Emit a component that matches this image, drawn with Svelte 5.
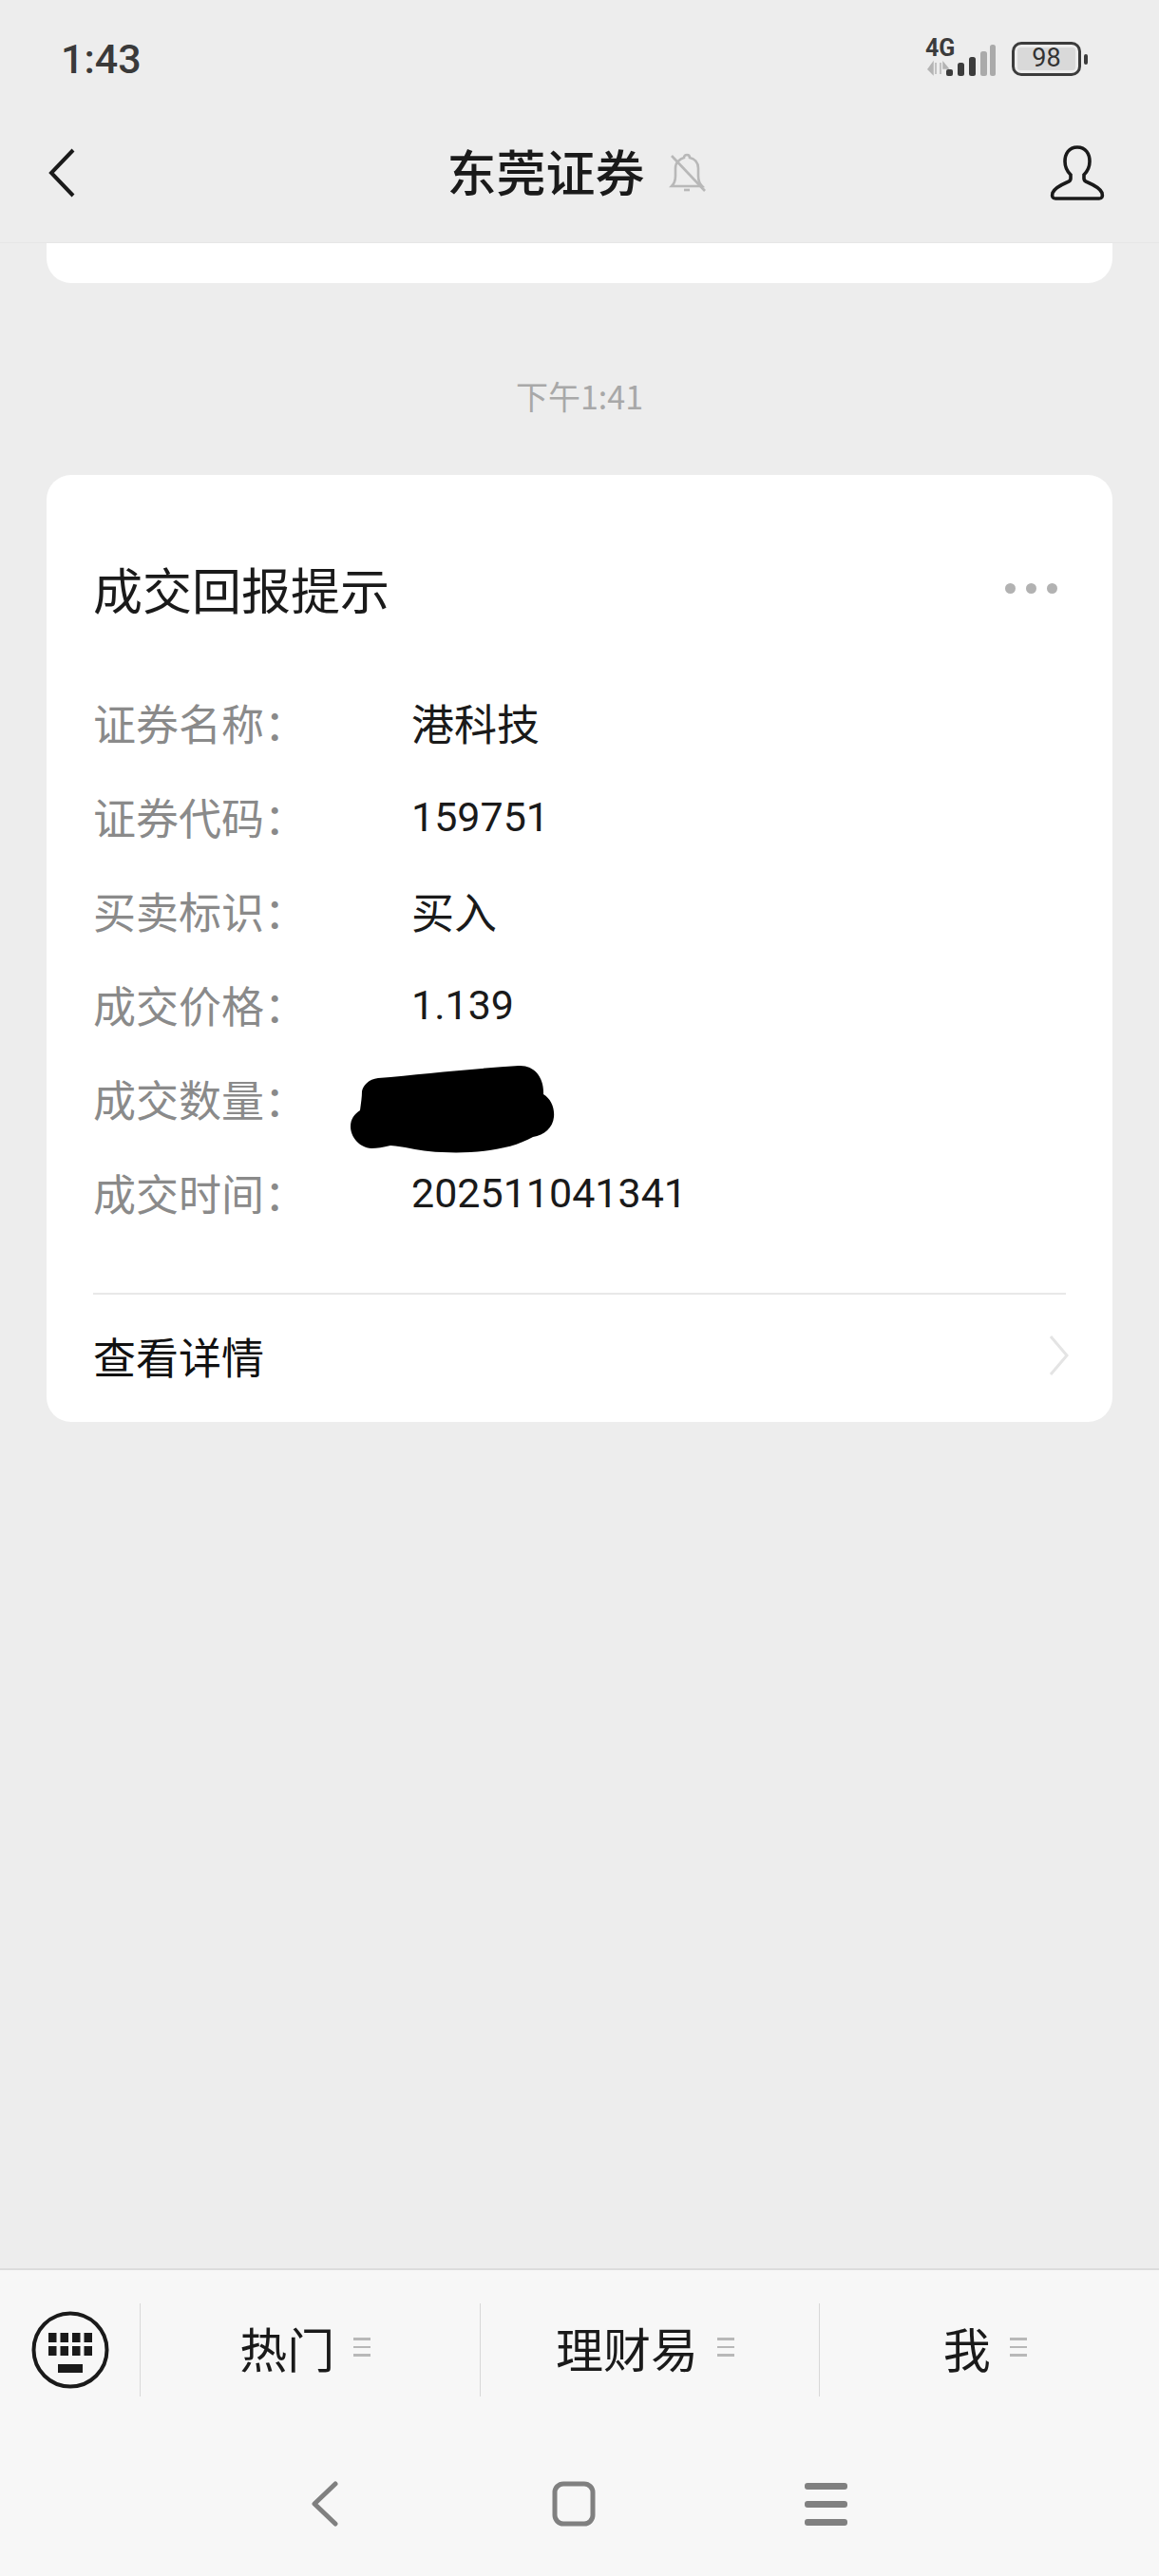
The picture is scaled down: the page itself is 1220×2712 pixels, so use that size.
<script>
  const rows = [
    { label: '证券名称：', value: '港科技' },
    { label: '证券代码：', value: '159751', num: true },
    { label: '买卖标识：', value: '买入' },
    { label: '成交价格：', value: '1.139', num: true },
    { label: '成交数量：', value: '', hidden: true },
    { label: '成交时间：', value: '202511041341', num: true }
  ];
  const tabs = ['热门', '理财易', '我'];
</script>

<div class="phone">
  <header class="top">
    <div class="status">
      <span class="clock">1:43</span>
      <div class="status-icons">
        <svg class="signal" width="76" height="50" viewBox="-2 -3 76 50">
          <text x="0" y="19" class="net">4G</text>
          <path d="M8 26v12l-5-5zM11 26v12M16 26v12M19 26l5 6-5 0z" fill="#b4b4b4" stroke="#b4b4b4" stroke-width="1.5" />
          <rect x="22" y="33" width="7" height="7" rx="2" fill="#3c3c3c" />
          <rect x="34" y="26" width="7" height="14" rx="2.5" fill="#3c3c3c" />
          <rect x="46" y="20" width="7" height="20" rx="2.5" fill="#3c3c3c" />
          <rect x="58" y="14" width="7" height="26" rx="2.5" fill="#aaa" />
          <rect x="68" y="7" width="6" height="33" rx="2.5" fill="#aaa" />
        </svg>
        <div class="battery">
          <span class="level">98</span>
        </div>
        <span class="nub"></span>
      </div>
    </div>
    <nav class="nav">
      <svg class="back" width="30" height="52" viewBox="0 0 30 52">
        <path d="M27 2 4 26l23 24" fill="none" stroke="#1a1a1a" stroke-width="4" />
      </svg>
      <div class="heading">
        <h1>东莞证券</h1>
        <svg width="40" height="42" viewBox="0 0 40 42" fill="none" stroke="#b8b8b8" stroke-width="2.6">
          <path d="M3 35c3-3 4-6 4-11v-8C7 10 12 6 16 5c0-4 6-4 6 0 5 1 9 5 9 11v8c0 5 1 8 4 11z" />
          <path d="M16 39h6" />
          <path d="M3 3l35 37" />
        </svg>
      </div>
      <svg class="user" width="60" height="58" viewBox="0 0 60 58" fill="none" stroke="#1a1a1a" stroke-width="3.6">
        <path d="M30 2c-9 0-13 7-13 15 0 6 3 11 6 14v4c0 2-1 3-4 4-7 3-13 6-15 11-1 4 0 6 3 6h46c3 0 4-2 3-6-2-5-8-8-15-11-3-1-4-2-4-4v-4c3-3 6-8 6-14 0-8-4-15-13-15z" />
      </svg>
    </nav>
  </header>

  <main class="messages">
    <div class="prev-card"></div>
    <p class="stamp">下午1:41</p>
    <section class="card">
      <div class="card-head">
        <h2>成交回报提示</h2>
        <div class="dots"><i></i><i></i><i></i></div>
      </div>
      <dl class="rows">
        {#each rows as row}
          <div class="row">
            <dt>{row.label}</dt>
            <dd class:num={row.num}>
              {row.value}
              {#if row.hidden}
                <svg class="scribble" width="216" height="94" viewBox="0 0 216 94">
                  <path fill="#000" d="M30 14C75 10 130 4 178 1c16-1 27 12 26 30 8 5 12 14 11 24-1 11-10 19-22 21-26 15-70 19-110 15-12-1-26-5-40-6-8 2-14 3-20 3C10 87 1 76 1 65c0-8 4-13 10-17 1-8 2-14 2-20C14 22 20 15 30 14z" />
                </svg>
              {/if}
            </dd>
          </div>
        {/each}
      </dl>
      <div class="detail">
        <span>查看详情</span>
        <svg width="24" height="42" viewBox="0 0 24 42">
          <path d="M3 1l17 20L3 41" fill="none" stroke="#e4e4e4" stroke-width="3" />
        </svg>
      </div>
    </section>
  </main>

  <footer class="bottom">
    <div class="menu-bar">
      <div class="kb">
        <svg width="82" height="82" viewBox="0 0 82 82">
          <circle cx="41" cy="41" r="38.5" fill="none" stroke="#1a1a1a" stroke-width="4" />
          <g fill="#1a1a1a">
            {#each [0, 1] as r}
              {#each [0, 1, 2, 3] as c}
                <rect x={18 + c * 12.5} y={23 + r * 14} width="8.5" height="10" />
              {/each}
            {/each}
            <rect x="28" y="56" width="26" height="9" />
          </g>
        </svg>
      </div>
      {#each tabs as tab}
        <div class="tab">
          <span>{tab}</span>
          <div class="lines"><i></i><i></i><i></i></div>
        </div>
      {/each}
    </div>
    <div class="sys-nav">
      <svg width="30" height="48" viewBox="0 0 30 48">
        <path d="M27 3 5 24l22 21" fill="none" stroke="#808080" stroke-width="5" stroke-linecap="round" stroke-linejoin="round" />
      </svg>
      <svg width="46" height="48" viewBox="0 0 46 48">
        <rect x="3" y="3" width="40" height="42" rx="9" fill="none" stroke="#808080" stroke-width="5" />
      </svg>
      <div class="sys-menu"><i></i><i></i><i></i></div>
    </div>
  </footer>
</div>

<style>
  :global(body) {
    margin: 0;
    background: #ededed;
  }

  .phone {
    display: flex;
    flex-direction: column;
    width: 1220px;
    height: 2712px;
    overflow: hidden;
    background: #ededed;
    font-family: "Noto Sans CJK SC", "Noto Sans", sans-serif;
    color: #1a1a1a;
  }

  .top {
    height: 256px;
    box-sizing: border-box;
    border-bottom: 1px solid #e6e6e6;
  }

  .status {
    display: flex;
    justify-content: space-between;
    align-items: center;
    height: 124px;
    padding: 0 73px 0 64px;
  }

  .clock {
    font-family: Roboto, sans-serif;
    font-size: 43px;
    font-weight: 500;
    color: #3a3a3a;
  }

  .status-icons {
    display: flex;
    align-items: center;
    margin-right: 2px;
  }

  .signal {
    margin-right: 17px;
  }

  .net {
    font-family: Roboto, sans-serif;
    font-size: 25px;
    font-weight: 700;
    fill: #3c3c3c;
  }

  .battery {
    display: flex;
    align-items: center;
    justify-content: center;
    box-sizing: border-box;
    width: 73px;
    height: 36px;
    padding: 3px;
    border: 3.5px solid #3c3c3c;
    border-radius: 10px;
  }

  .level {
    flex: 1;
    height: 100%;
    border-radius: 3px;
    background: #d9d9d9;
    color: #333;
    font-family: Roboto, sans-serif;
    font-size: 27px;
    line-height: 23px;
    text-align: center;
  }

  .nub {
    width: 4px;
    height: 11px;
    margin-left: 3px;
    border-radius: 2px;
    background: #3c3c3c;
  }

  .nav {
    display: flex;
    justify-content: space-between;
    align-items: center;
    height: 116px;
    padding: 0 56px 0 50px;
  }

  .heading {
    display: flex;
    align-items: center;
    gap: 25px;
    margin-left: 30px;
  }

  h1 {
    margin: 0;
    font-size: 52px;
    font-weight: 500;
    line-height: 1.2;
    transform: translateY(-2px);
  }

  .messages {
    flex: 1;
    padding: 0 49px;
  }

  .prev-card {
    height: 42px;
    border-radius: 0 0 26px 26px;
    background: #fff;
  }

  .stamp {
    margin: 91px 0 0;
    text-align: center;
    font-size: 34px;
    line-height: 56px;
    color: #a8a8a8;
  }

  .card {
    margin-top: 55px;
    padding: 0 49px;
    border-radius: 26px;
    background: #fff;
  }

  .card-head {
    display: flex;
    justify-content: space-between;
    align-items: center;
    box-sizing: border-box;
    height: 211px;
    padding: 27px 9px 0 0;
  }

  h2 {
    margin: 0;
    font-size: 52px;
    font-weight: 400;
  }

  .dots {
    display: flex;
    gap: 11px;
  }

  .dots i {
    width: 11px;
    height: 11px;
    border-radius: 50%;
    background: #b2b2b2;
  }

  .rows {
    margin: 0;
    padding-bottom: 56px;
    border-bottom: 2px solid #e8e8e8;
  }

  .row {
    display: flex;
    align-items: center;
    height: 99px;
    font-size: 45px;
  }

  .row dt {
    width: 335px;
    color: #8a8a8a;
    white-space: nowrap;
  }

  .row dd {
    position: relative;
    margin: 0;
    font-size: 45px;
    color: #1a1a1a;
  }

  .row dd.num {
    font-family: Roboto, sans-serif;
    font-size: 43px;
  }

  .scribble {
    position: absolute;
    left: -65px;
    top: -36px;
  }

  .detail {
    display: flex;
    justify-content: space-between;
    align-items: center;
    box-sizing: border-box;
    height: 134px;
    margin-right: -5px;
    padding-bottom: 6px;
    font-size: 45px;
    color: #111;
  }

  .bottom {
    height: 324px;
    box-sizing: border-box;
    border-top: 2px solid #dcdcdc;
    background: #f7f7f7;
  }

  .menu-bar {
    display: flex;
    align-items: center;
    height: 98px;
    margin-top: 35px;
  }

  .kb {
    display: flex;
    justify-content: center;
    width: 147px;
  }

  .tab {
    display: flex;
    flex: 1;
    justify-content: center;
    align-items: center;
    gap: 20px;
    box-sizing: border-box;
    height: 100%;
    padding: 0 10px 6px 0;
    border-left: 1px solid #d8d8d8;
    font-size: 50px;
  }

  .lines {
    display: flex;
    flex-direction: column;
    gap: 6px;
  }

  .lines i {
    width: 18px;
    height: 2.5px;
    background: #b8b8b8;
  }

  .sys-nav {
    display: flex;
    align-items: center;
    gap: 0;
    height: 48px;
    margin-top: 89px;
    padding-left: 326px;
  }

  .sys-nav svg:nth-child(2) {
    margin-left: 225px;
  }

  .sys-menu {
    display: flex;
    flex-direction: column;
    gap: 12px;
    margin-left: 220px;
  }

  .sys-menu i {
    width: 45px;
    height: 7px;
    border-radius: 3px;
    background: #808080;
  }
</style>
